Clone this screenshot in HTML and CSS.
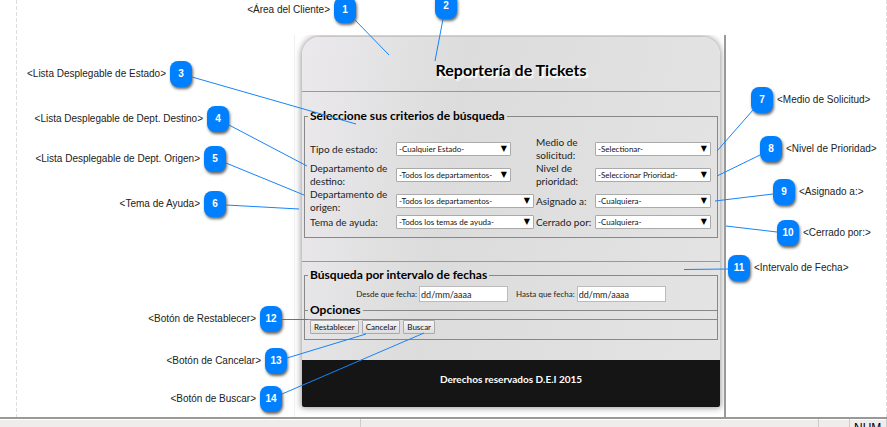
FILE: index.html
```html
<!DOCTYPE html>
<html lang="es">
<head>
<meta charset="utf-8">
<title>Reportería de Tickets</title>
<link rel="stylesheet" href="styles.css">
</head>
<body>
<main class="canvas">
  <div class="window">
    <div class="card">
      <header class="card-header"><h1>Reportería de Tickets</h1></header>
      <form class="report">
        <fieldset class="criteria">
          <legend>Seleccione sus criterios de búsqueda</legend>
          <div class="criteria-grid">
            <label for="estado">Tipo de estado:</label>
            <div class="picker short"><select id="estado"><option>-Cualquier Estado-</option></select></div>
            <label for="medio">Medio de solicitud:</label>
            <div class="picker"><select id="medio"><option>-Selectionar-</option></select></div>
            <label for="destino">Departamento de destino:</label>
            <div class="picker short"><select id="destino"><option>-Todos los departamentos-</option></select></div>
            <label for="prioridad">Nivel de prioridad:</label>
            <div class="picker"><select id="prioridad"><option>-Seleccionar Prioridad-</option></select></div>
            <label for="origen">Departamento de origen:</label>
            <div class="picker"><select id="origen"><option>-Todos los departamentos-</option></select></div>
            <label for="asignado">Asignado a:</label>
            <div class="picker"><select id="asignado"><option>-Cualquiera-</option></select></div>
            <label for="tema">Tema de ayuda:</label>
            <div class="picker"><select id="tema"><option>-Todos los temas de ayuda-</option></select></div>
            <label for="cerrado">Cerrado por:</label>
            <div class="picker"><select id="cerrado"><option>-Cualquiera-</option></select></div>
          </div>
        </fieldset>
        <hr>
        <fieldset class="dates">
          <legend>Búsqueda por intervalo de fechas</legend>
          <div class="date-row">
            <label for="desde">Desde que fecha:</label><input id="desde" type="text" value="dd/mm/aaaa">
            <label class="until" for="hasta">Hasta que fecha:</label><input id="hasta" type="text" value="dd/mm/aaaa">
          </div>
        </fieldset>
        <fieldset class="options">
          <legend>Opciones</legend>
          <div class="buttons">
            <button type="reset">Restablecer</button>
            <button type="button">Cancelar</button>
            <button type="submit">Buscar</button>
          </div>
        </fieldset>
      </form>
      <footer class="card-footer">Derechos reservados D.E.I 2015</footer>
    </div>
  </div>

  <svg class="leaders" viewBox="0 0 887 417" preserveAspectRatio="none" aria-hidden="true">
    <path d="M355 20L389 55M443 19L435 61M192 77L356 124M229 125L307 166M226 163L304 195M226 205L299 209M753 110L717 151M760 155L717 176M773 194L715 201M777 232L726 226M728 269L684 269.500M282 319.500L308 319.500M287 358L366 334M282 394L424 333"/>
  </svg>

  <div class="callout left c1"><span>&lt;Área del Cliente&gt;</span><b>1</b></div>
  <div class="callout left c2"><b>2</b></div>
  <div class="callout left c3"><span>&lt;Lista Desplegable de Estado&gt;</span><b>3</b></div>
  <div class="callout left c4"><span>&lt;Lista Desplegable de Dept. Destino&gt;</span><b>4</b></div>
  <div class="callout left c5"><span>&lt;Lista Desplegable de Dept. Origen&gt;</span><b>5</b></div>
  <div class="callout left c6"><span>&lt;Tema de Ayuda&gt;</span><b>6</b></div>
  <div class="callout c7"><b>7</b><span>&lt;Medio de Solicitud&gt;</span></div>
  <div class="callout c8"><b>8</b><span>&lt;Nivel de Prioridad&gt;</span></div>
  <div class="callout c9"><b>9</b><span>&lt;Asignado a:&gt;</span></div>
  <div class="callout c10"><b>10</b><span>&lt;Cerrado por:&gt;</span></div>
  <div class="callout c11"><b>11</b><span>&lt;Intervalo de Fecha&gt;</span></div>
  <div class="callout left c12"><span>&lt;Botón de Restablecer&gt;</span><b>12</b></div>
  <div class="callout left c13"><span>&lt;Botón de Cancelar&gt;</span><b>13</b></div>
  <div class="callout left c14"><span>&lt;Botón de Buscar&gt;</span><b>14</b></div>
</main>
<div class="statusbar"><span class="message"></span><span class="cell"></span><span class="cell num">NUM</span></div>
</body>
</html>
```
FILE: styles.css
```css
* { box-sizing: border-box; }

body {
  margin: 0;
  height: 100vh;
  display: flex;
  flex-direction: column;
  overflow: hidden;
  background: #fff;
  color: #222;
  font-family: Lato, sans-serif;
}

.canvas {
  position: relative;
  flex: 1;
  min-height: 0;
  padding: 35px 161px 0 294px;
  overflow: hidden;
}

/* dashed page margins */
.canvas::before {
  content: "";
  position: absolute;
  inset: 0 0 0 16px;
  background:
    repeating-linear-gradient(#ddd 0 4px, transparent 4px 6px) left / 1px 100% no-repeat,
    repeating-linear-gradient(#ddd 0 4px, transparent 4px 6px) right / 1px 100% no-repeat;
}

.window {
  position: relative;
  height: 100%;
  padding: 2px 4px 0 7px;
  border-left: 1px solid #f0f0f0;
  border-right: 2px solid #999;
  overflow: hidden;
}

.card {
  border-radius: 18px 18px 2px 2px;
  overflow: hidden;
  background: linear-gradient(100deg, #ebe9ec 0, #dcdcdc 35%, #e4e4e4 100%);
  box-shadow: 0 0 6px 1px #999;
}

.card-header {
  height: 55px;
  padding-top: 22px;
  border-bottom: 1px solid #999;
  text-align: center;
}

h1 {
  margin: 0;
  color: #000;
  font-size: 16px;
  line-height: 22px;
  text-shadow: 1px 1px 2px #fff, 2px 2px 2px #fff;
}

.report { padding: 16px 2px 20px; }

fieldset {
  min-width: 0;
  margin: 0;
  padding: 0 6px;
  border: 1px solid #888;
}

legend {
  margin-left: -3px;
  padding: 0 2px;
  color: #000;
  font-size: 12px;
  font-weight: bold;
  line-height: 16px;
}

.criteria { height: 130px; }

.criteria-grid {
  display: grid;
  grid-template-columns: 86px 138px 61px 1fr;
  grid-template-rows: 26px 26px 26px 16px;
  align-items: center;
  margin-top: 12px;
  margin-left: -1px;
  font-size: 10px;
  line-height: 13px;
}

.criteria-grid label:nth-of-type(even) { padding-left: 2px; }

.picker { position: relative; }
.picker.short { margin-right: 23px; }

.picker::after {
  content: "▼";
  position: absolute;
  top: 0;
  right: 4px;
  color: #000;
  font: 8px/13px "DejaVu Sans", sans-serif;
  pointer-events: none;
}

select {
  display: block;
  width: 100%;
  height: 14px;
  padding: 0 2px;
  appearance: none;
  border: 1px solid #aaa;
  border-radius: 1px;
  background: #fff;
  color: #111;
  font: 8px/12px Lato, sans-serif;
}

hr {
  margin: 23px -2px 5px;
  border: 0;
  border-top: 1px solid #999;
}

.dates { height: 53px; }

.date-row {
  display: flex;
  align-items: center;
  justify-content: center;
  gap: 2px;
  margin-top: 3px;
  font-size: 8px;
  line-height: 16px;
}

.until { margin-left: 6px; }

input {
  width: 89px;
  height: 16px;
  padding: 0 1px;
  border: 1px solid #bbb;
  background: #fff;
  color: #222;
  font: 9px/14px Lato, sans-serif;
}

.options {
  height: 38px;
  margin-top: -18px;
}

.buttons {
  display: flex;
  gap: 3px;
  margin-top: 2px;
  margin-left: -1px;
}

button {
  height: 14px;
  padding: 0 3px;
  border: 1px solid #aaa;
  border-radius: 1px;
  background: linear-gradient(#f5f5f5, #ddd);
  color: #111;
  font: 8px/12px Lato, sans-serif;
}

.card-footer {
  height: 47px;
  padding-top: 10px;
  background: #151515;
  color: #fff;
  font-size: 10px;
  font-weight: bold;
  line-height: 18px;
  text-align: center;
}

/* numbered annotations over the window */
.leaders {
  position: absolute;
  top: 0;
  left: 0;
  width: 100%;
  height: 417px;
  fill: none;
  stroke: #1684f8;
  stroke-width: 1;
}

.callout {
  position: absolute;
  display: flex;
  align-items: center;
  gap: 4px;
  color: #222;
  font: 10px/28px "Liberation Sans", sans-serif;
  white-space: nowrap;
}

.callout b {
  width: 22px;
  height: 26px;
  border-radius: 8px;
  background: #0080ff;
  box-shadow: 1px 2px 3px #666;
  color: #fff;
  font-size: 10px;
  line-height: 26px;
  text-align: center;
}

.c1 { right: 531px; top: -4px; }
.c2 { right: 430px; top: -7px; }
.c3 { right: 695px; top: 60px; }
.c4 { right: 658px; top: 105px; }
.c5 { right: 661px; top: 145px; }
.c6 { right: 661px; top: 190px; }
.c7 { left: 751px; top: 86px; }
.c8 { left: 760px; top: 135px; }
.c9 { left: 773px; top: 178px; }
.c10 { left: 777px; top: 219px; }
.c11 { left: 728px; top: 254px; }
.c12 { right: 605px; top: 305px; }
.c13 { right: 600px; top: 347px; }
.c14 { right: 605px; top: 385px; }

.statusbar {
  display: flex;
  height: 10px;
  border-top: 2px solid #999;
  background: #f0eceb;
  box-shadow: inset 0 1px #fff;
  overflow: hidden;
}

.message {
  flex: 1;
  margin-left: 360px;
  border-left: 1px solid #ccc;
}

.cell {
  width: 31px;
  border-left: 1px solid #ccc;
}

.num {
  width: 38px;
  padding-left: 4px;
  border-right: 1px solid #ccc;
  color: #000;
  font: 12px/18px "Liberation Sans", sans-serif;
}
```
